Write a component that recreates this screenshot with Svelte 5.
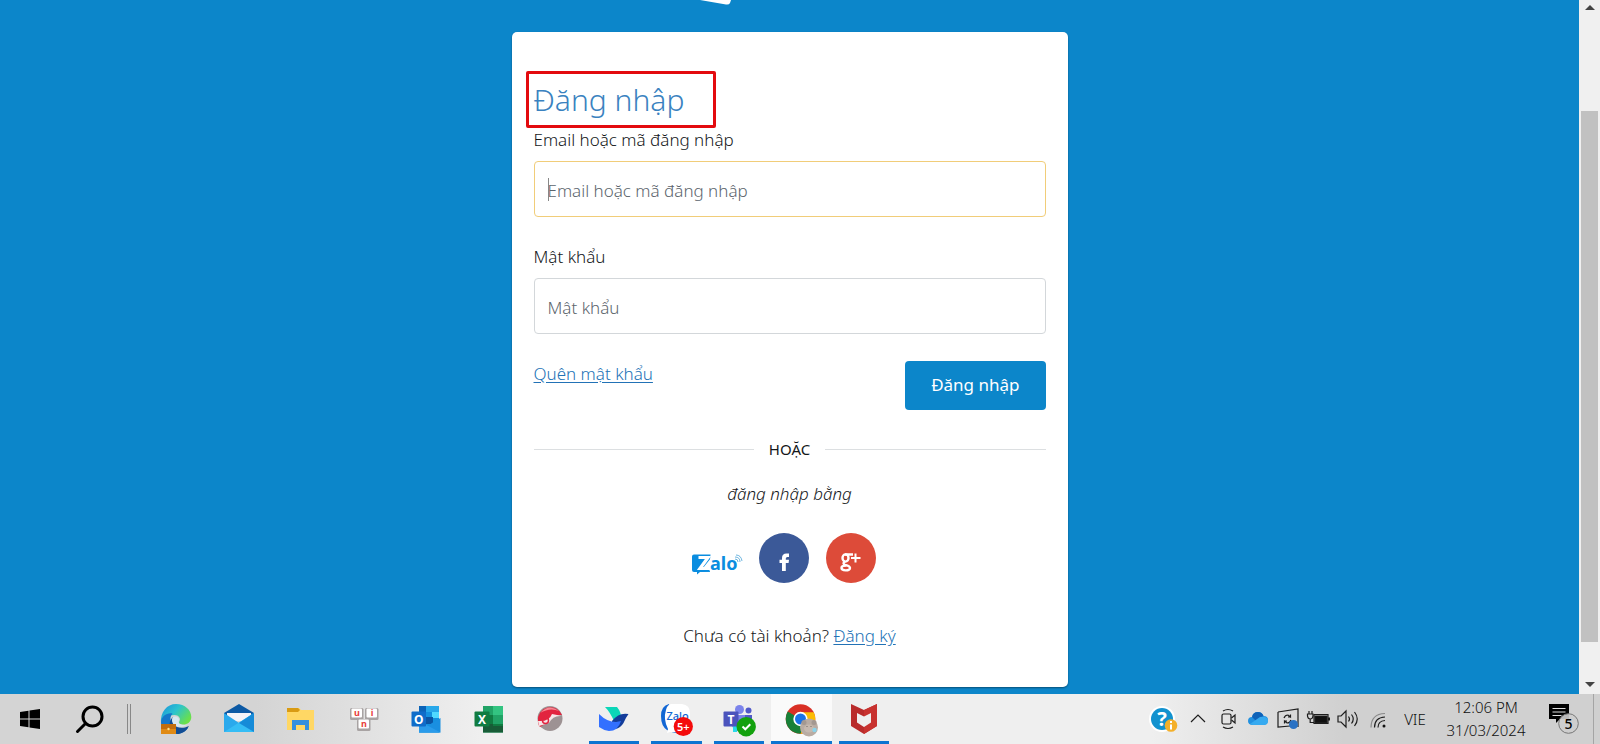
<script lang="ts">
  let email = $state('')
  let password = $state('')

  type App = { id: string; label: string; running?: boolean; active?: boolean }

  const apps: App[] = [
    { id: 'edge', label: 'Microsoft Edge' },
    { id: 'mail', label: 'Mail' },
    { id: 'files', label: 'File Explorer' },
    { id: 'unikey', label: 'UniKey' },
    { id: 'outlook', label: 'Outlook' },
    { id: 'excel', label: 'Excel' },
    { id: 'capture', label: 'Capture' },
    { id: 'bird', label: 'Lark', running: true },
    { id: 'zalo', label: 'Zalo', running: true },
    { id: 'teams', label: 'Teams', running: true },
    { id: 'chrome', label: 'Chrome', running: true, active: true },
    { id: 'mcafee', label: 'McAfee', running: true },
  ]

  const tray = ['chevron', 'camera', 'cloud', 'display', 'battery', 'volume', 'wifi']
</script>

<div class="screen">
  <div class="viewport">
    <main class="page">
      <svg class="logo-edge" viewBox="0 0 32 6" width="32" height="6" aria-hidden="true">
        <path d="M0 0h31l-1 3q-1 2-4 1.500z" fill="#fff" />
      </svg>

      <section class="card">
        <h1>Đăng nhập</h1>
        <form onsubmit={(e) => e.preventDefault()}>
          <div class="fields">
            <div>
              <label for="email">Email hoặc mã đăng nhập</label>
              <div class="control">
                <input id="email" class="current" type="text" placeholder="Email hoặc mã đăng nhập" bind:value={email} />
                <span class="caret"></span>
              </div>
            </div>
            <div>
              <label for="password">Mật khẩu</label>
              <div class="control">
                <input id="password" type="password" placeholder="Mật khẩu" bind:value={password} />
              </div>
            </div>
          </div>
          <div class="actions">
            <a href="#forgot">Quên mật khẩu</a>
            <button class="submit" type="submit">Đăng nhập</button>
          </div>
        </form>

        <div class="divider"><span>HOẶC</span></div>
        <p class="with">đăng nhập bằng</p>

        <div class="social">
          <a href="#zalo" aria-label="Zalo">
            <svg viewBox="0 0 50 50" width="50" height="50">
              <path d="M2 21.500h16.500L17 38.500l-9 .5-3 2.500V39H2q-2 0-2-2V23.500q0-2 2-2z" fill="#0a8de0" />
              <path d="M19 25l-8 10h10v5H15l4-2z" fill="#fff" />
              <path d="M6.500 24.500h9.500L8 35.500h10" fill="none" stroke="#fff" stroke-width="3.200" />
              <path d="M9 38.200h9" stroke="#0a8de0" stroke-width="1.400" />
              <text x="18" y="37" font-size="18" font-weight="700" fill="#0a8de0">alo</text>
              <path d="M43 26q3 0 3 3M43 24q5 0 5 5M44 22q5 0 6 6" fill="none" stroke="#4aa3d8" stroke-width=".8" />
            </svg>
          </a>
          <a href="#facebook" aria-label="Facebook">
            <svg viewBox="0 0 50 50" width="50" height="50">
              <circle cx="25" cy="25" r="25" fill="#3b5998" />
              <path d="M23 38V30h-2.500v-3.200H23v-1.800q0-4.500 4.500-4.500h2.500v3.400h-1.600q-1.600 0-1.600 1.600v1.300H30l-.4 3.200h-2.800v8z" fill="#fff" />
            </svg>
          </a>
          <a href="#google" aria-label="Google Plus">
            <svg viewBox="0 0 50 50" width="50" height="50">
              <circle cx="25" cy="25" r="25" fill="#dd4b39" />
              <g fill="none" stroke="#fff" stroke-width="2.400">
                <ellipse cx="19.500" cy="25" rx="3" ry="3.600" />
                <path d="M27 21.500h-8M19 28.500q-3 2 0 3.300c3 .8 5 1.300 5 3.200c0 3.300-8.500 3-8.500 0q0-2.500 5-2.500" />
                <path d="M29.500 20.500v9M25 25h9.500" stroke-width="2" />
              </g>
            </svg>
          </a>
        </div>

        <p class="signup">Chưa có tài khoản? <a href="#register">Đăng ký</a></p>
      </section>
    </main>

    <div class="scrollbar" aria-hidden="true">
      <svg viewBox="0 0 10 5" width="10" height="5"><path d="M0 5l5-5 5 5z" fill="#444" /></svg>
      <div class="track"><div class="thumb"></div></div>
      <svg viewBox="0 0 10 5" width="10" height="5"><path d="M0 0l5 5 5-5z" fill="#444" /></svg>
    </div>
  </div>

  <footer class="taskbar">
    <button class="sys" aria-label="Start">
      <svg viewBox="0 0 20 20" width="20" height="20"><path d="M0 3l8.500-1.200v7.700H0zM9.500 1.600L20 0v9.500H9.500zM0 10.500h8.500v7.700L0 17zM9.500 10.500H20V20L9.500 18.400z" /></svg>
    </button>
    <button class="sys" aria-label="Search">
      <svg viewBox="0 0 28 28" width="28" height="28" fill="none" stroke="#000" stroke-width="3"><circle cx="16.500" cy="11.500" r="9.500" /><path d="M9.500 18.500L1.500 26.500" stroke-linecap="round" /></svg>
    </button>
    <span class="grip"></span>

    <nav class="apps">
      {#each apps as app}
        <button class="app" class:running={app.running} class:active={app.active} aria-label={app.label}>
          <svg viewBox="0 0 32 32" width="32" height="32">
            {#if app.id === 'edge'}
              <defs>
                <linearGradient id="edge-a" x1="0" y1="0" x2="1" y2=".6"><stop offset="0" stop-color="#1b8fdc" /><stop offset=".5" stop-color="#2bc3cf" /><stop offset="1" stop-color="#6be04a" /></linearGradient>
              </defs>
              <path d="M16 1c9 0 15.300 6 15.300 13 0 5-4 7.500-8 7.500-3 0-5-1.200-4-3 2-3-.5-6.500-5-6.500C8 12 3 15 1 20 0 9 7 1 16 1z" fill="url(#edge-a)" />
              <path d="M1 20C1 13 7 9.500 12.500 10.500 8 15 11 24 21 26l7-1c-3 4-8 6-12 6C7 31 1 26 1 20z" fill="#1577c9" />
              <path d="M13 14c-2 8 5 14 16 9-3 6-8 8-12 8C8 28 8 18 13 14z" fill="#124d94" />
              <path d="M12 17c0-5 7-4 7 0-1 3-1 5 8 5-8 4-15 1-15-5z" fill="#d8e8f0" />
              <rect x="1" y="21" width="15" height="10" fill="#e08a14" /><path d="M1 21h15v5H1z" fill="#c26d0c" /><circle cx="8.500" cy="26" r="1.200" fill="#ffe08a" />
            {:else if app.id === 'mail'}
              <path d="M1 10L16 1l15 9v4H1z" fill="#0c59a4" />
              <path d="M4 10h24v8H4z" fill="#f3f3f8" />
              <path d="M1 10l15 10 15-10v19H1z" fill="#2aa9ec" />
              <path d="M31 10L1 29h30z" fill="#35bdf5" /><path d="M16 20L31 29V10z" fill="#168bd8" />
            {:else if app.id === 'files'}
              <path d="M2 5h12l2 2h13v20H2z" fill="#ffd764" /><path d="M2 5h11l2 2-2 2H2z" fill="#d99b13" />
              <path d="M7 27V17h17v10h-4v-5h-9v5z" fill="#3490dc" />
            {:else if app.id === 'unikey'}
              {#each [[2, 5, 'u'], [17, 5, 'i'], [9, 16, 'n']] as [x, y, ch]}
                <rect {x} {y} width="13.500" height="12" rx="1.500" fill="#a8a3a3" />
                <rect x={+x + 1.5} y={+y + 0.5} width="10.500" height="9" rx="1" fill="#fff" />
                <text x={+x + 7} y={+y + 8} font-size="9" font-weight="700" text-anchor="middle" fill="#e8403c">{ch}</text>
              {/each}
            {:else if app.id === 'outlook'}
              <path d="M9 3h20v26.500H9z" fill="#1490df" /><path d="M9 3h7v9H9z" fill="#0a63b8" /><path d="M16 3h13v6H16z" fill="#28a8ea" /><path d="M22 9h7v6h-7z" fill="#50d9ff" /><path d="M15 14h8v7h-8z" fill="#0a55a5" />
              <path d="M30.500 15v14.500H9L22 20z" fill="#1a8fe0" /><path d="M9 18l21.500 11.500H9z" fill="#2a9bea" />
              <rect x="1.500" y="8.500" width="14.500" height="15" rx="1" fill="#0f6cc9" /><text x="8.700" y="20.500" font-size="12" font-weight="700" text-anchor="middle" fill="#fff">O</text>
            {:else if app.id === 'excel'}
              <path d="M10 3h20v26.500H10z" fill="#21a366" /><path d="M20 3h10v9H20z" fill="#33c481" /><path d="M10 12h10v9H10z" fill="#107c41" /><path d="M10 21h20v8.500H10z" fill="#185c37" /><path d="M20 21h10v2H20z" fill="#107c41" />
              <rect x="1.500" y="8.500" width="15" height="15" rx="1" fill="#107c41" /><text x="9" y="20.500" font-size="12" font-weight="700" text-anchor="middle" fill="#fff">X</text>
            {:else if app.id === 'capture'}
              <circle cx="15" cy="15.500" r="12.500" fill="#9d9293" />
              <path d="M3 18A12.500 12.500 0 0 1 27 12q-8-1-14 7l-8 5q-2-2-2-6z" fill="#e2243f" /><path d="M5 10q9-10 19-2-9-4-19 2z" fill="#f58a95" />
              <path d="M3 18q11 1 14-7l10 2q-9-1-13 7l-10 3z" fill="#f6e6e7" />
              <circle cx="10.500" cy="17.500" r="3" fill="none" stroke="#e2243f" stroke-width="1.500" />
            {:else if app.id === 'bird'}
              <path d="M7 4h12q4 5 4 10l-7 4Q12 9 7 4z" fill="#0bd6b8" />
              <path d="M14 18q7-9 16.500-7-3 4-5 9-3 5-8 6-4-4-3.500-8z" fill="#133c9a" /><path d="M1 11q8 8 17 8l5-1q-3 10-12 10-6-1-10-4z" fill="#3370ff" />
            {:else if app.id === 'zalo'}
              <path d="M9 1Q1 3 1 13t6 14q5 3 12 3l-8-14z" fill="#1266d4" />
              <path d="M11 1h11q8 1 8 9v9q-1 9-9 10H10l-3 1 1-4Q3 16 6 7q1-5 5-6z" fill="#fff" />
              <text x="6.500" y="16.500" font-size="11" font-weight="500" fill="#1266d4">Zalo</text>
              <circle cx="23.300" cy="23.500" r="9.600" fill="#f40b0b" /><text x="23.300" y="27.500" font-size="11" font-weight="600" text-anchor="middle" fill="#fff">5+</text>
            {:else if app.id === 'teams'}
              <circle cx="16.500" cy="6.500" r="4.500" fill="#7b83eb" /><circle cx="25.500" cy="7.500" r="3" fill="#5059c9" />
              <path d="M11 12h12v10q-2 7-9 6-4-2-5-5z" fill="#7b83eb" /><path d="M22 12h7v9h-7z" fill="#5059c9" /><path d="M10 22h4v7h-4z" fill="#29d9ea" />
              <rect x=".5" y="8.500" width="15" height="15" rx="1" fill="#4b53bc" /><text x="8" y="20.500" font-size="12" font-weight="700" text-anchor="middle" fill="#fff">T</text>
              <circle cx="23.200" cy="23.700" r="9.700" fill="#13a10e" /><path d="M19.500 23.500l2.800 2.800 5-5" fill="none" stroke="#fff" stroke-width="2" />
            {:else if app.id === 'chrome'}
              <circle cx="15.500" cy="16" r="14.800" fill="#d93025" />
              <path d="M15.500 16L2.700 8.600a14.800 14.800 0 0 0 12.800 22.200l7-12z" fill="#188038" /><path d="M15.500 9.300h13.200a14.800 14.800 0 0 1-13.200 21.500l6-12z" fill="#fbbc04" />
              <circle cx="15.500" cy="16" r="7.200" fill="#fff" /><circle cx="15.500" cy="16" r="5.500" fill="#1a73e8" />
              <circle cx="24" cy="24.500" r="9" fill="#b9aca3" /><circle cx="19" cy="19.500" r="2.500" fill="#a39891" /><circle cx="29" cy="19.500" r="2.500" fill="#a39891" /><ellipse cx="24" cy="25.500" rx="5" ry="4" fill="#c6b9af" /><circle cx="22" cy="23.500" r=".6" fill="#685f5a" /><circle cx="26" cy="23.500" r=".6" fill="#685f5a" /><circle cx="29.500" cy="27" r="2.200" fill="#8bd3ea" />
            {:else}
              <path d="M3 1l13 6 13-6v22l-13 8-13-8z" fill="#b92b2b" /><path d="M16 7l13-6v22l-13 8z" fill="#c8322f" /><path d="M9 10l7 3.500L23 10v9.500L16 24l-7-4.500z" fill="#efefef" />
            {/if}
          </svg>
        </button>
      {/each}
    </nav>

    <div class="tray">
      <button class="help" aria-label="Help">
        <svg viewBox="0 0 28 28" width="28" height="28">
          <circle cx="13" cy="14" r="13" fill="#fff" /><circle cx="13" cy="14" r="11" fill="#1292cf" />
          <text x="13" y="21" font-size="20" font-weight="700" text-anchor="middle" fill="#fff">?</text>
          <circle cx="22" cy="20.500" r="6.300" fill="#f4b02a" /><path d="M22 16v2M22 19.500v5" stroke="#fff" stroke-width="2" />
        </svg>
      </button>
      {#each tray as item}
        <button class="cell" aria-label={item}>
          <svg viewBox="0 0 24 24" width="24" height="24" fill="none" stroke="#1d1d1d" stroke-width="1.200">
            {#if item === 'chevron'}
              <path d="M5 15l7-7 7 7" />
            {:else if item === 'camera'}
              <rect x="6" y="7" width="9" height="10" rx="1.500" /><path d="M15.500 11l3.500-3v8l-3.500-3M7 4q5-3 10 0M7 20q5 3 10 0" />
            {:else if item === 'cloud'}
              <g stroke="none"><path d="M7 18q-5 0-5-4t4-4q1-5 6-5 4 0 5.500 4Q22 9 22 13t-4 5z" fill="#2291e0" /><path d="M6 10q1-5 6-5 4 0 5.500 4L10 14z" fill="#0f62b8" /><path d="M4 17l10-7q8-1 8 4 0 4-4 4H7z" fill="#36aaf0" /></g>
            {:else if item === 'display'}
              <path d="M2 5l20-3v18M2 5v15l12-1" /><path d="M8 11q1-3 4-3l2.500 2V7.500M14.500 10H12M15 13q-1 3-4 3l-2.500-2v2.500M8.500 14H11" /><circle cx="17.500" cy="17.500" r="4.500" fill="#2a72c4" stroke="none" />
            {:else if item === 'battery'}
              <path d="M8 7.500h14v9H8z" /><path d="M9 9h12v6.500H9z" fill="#111" /><path d="M23 10.500v3" stroke-width="2" /><path d="M3 4v3M6 4v3M1.500 7H7v2q-.5 3-2.800 3T1.500 9zM4.200 12v3.500H8" />
            {:else if item === 'volume'}
              <path d="M2 9h3l5-5v16l-5-5H2z" /><path d="M12.500 9.500q2 2.500 0 5M15.500 7.500q3.500 4.500 0 9M18.500 5q5.500 7 0 14" />
            {:else}
              <circle cx="18" cy="19" r="1.500" fill="#111" stroke="none" /><path d="M12 20.500q0-6.500 7-7M8.500 20.500q0-10 10.500-10.500" /><path d="M5 20.500Q5 7 19 6.500" stroke="#888" />
            {/if}
          </svg>
        </button>
      {/each}
      <button class="lang">VIE</button>
      <button class="clock"><time datetime="2024-03-31T12:06"><span>12:06 PM</span><span>31/03/2024</span></time></button>
      <button class="notes" aria-label="Notifications">
        <svg viewBox="0 0 30 30" width="30" height="30">
          <path d="M0 0h20v15h-9l-4 4v-4H0z" /><path d="M3.500 4.500h13M3.500 8h13M3.500 11.500h9" stroke="#ddd" stroke-width="1.200" />
          <circle cx="19.500" cy="19.500" r="9.800" fill="#cdcdcd" fill-opacity=".9" stroke="#777" /><text x="19.500" y="24.500" font-size="14" font-weight="500" text-anchor="middle">5</text>
        </svg>
      </button>
      <span class="desktop"></span>
    </div>
  </footer>
</div>

<style>
  :global(body) { margin: 0; }
  .screen {
    display: flex; flex-direction: column; min-height: 100vh;
    font: 350 17px/24px "Noto Sans", "Open Sans", sans-serif; color: #14171a;
  }
  button { font: inherit; color: inherit; border: 0; background: none; padding: 0; cursor: pointer; }
  p { margin: 0; }
  svg { display: block; overflow: visible; flex: none; }
  a { color: #2272b6; text-underline-offset: 2px; }

  .viewport { flex: 1; display: flex; }
  .page { position: relative; flex: 1; background: #0c86ca; padding: 32px 16px 7px; }
  .logo-edge { position: absolute; top: 0; left: calc(50% - 90px); }

  .card {
    box-sizing: border-box; max-width: 556px; margin: 0 auto; padding: 39px 22px;
    background: #fff; border-radius: 5px; box-shadow: 0 1px 2px rgba(0, 0, 0, 0.4);
  }
  h1 {
    box-sizing: border-box; width: 190px; margin: 0 0 0 -8px; padding-left: 5px;
    border: 3px solid #e30b0f; border-radius: 2px;
    font-size: 30px; line-height: 51px; font-weight: 350; color: #3a82c0;
  }
  .fields { display: grid; gap: 28px; }
  label { display: block; margin-bottom: 9px; }
  .control { position: relative; }
  input {
    display: block; box-sizing: border-box; width: 100%; height: 56px; padding: 2px 13px 0;
    border: 1px solid #d3d7da; border-radius: 4px; background: #fff;
    font: inherit; color: inherit; outline: none;
  }
  input::placeholder { color: #5c656d; opacity: 1; }
  input.current, input:focus { border-color: #f1cd79; }
  .caret { position: absolute; left: 14px; top: 17px; width: 1px; height: 23px; background: #888; }

  .actions { display: flex; justify-content: space-between; align-items: flex-start; margin-top: 27px; }
  .actions a { margin-top: 1px; }
  .submit { padding: 12px 26px 13px; background: #0c86ca; border-radius: 4px; color: #fff; font-weight: 400; }

  .divider {
    display: flex; align-items: center; gap: 15px; margin: 29px 0 23px;
    font-size: 15px; line-height: 20px; font-weight: 400;
  }
  .divider::before, .divider::after { content: ""; flex: 1; height: 1px; background: #dcdfe1; }
  .with { text-align: center; font-style: italic; }
  .social { display: flex; justify-content: center; gap: 17px; margin: 27px 12px 41px 0; }
  .social a { text-decoration: none; }
  .signup { text-align: center; }

  .scrollbar {
    width: 21px; box-sizing: border-box; padding: 5px 0 7px; background: #f0f0f0;
    display: flex; flex-direction: column; align-items: center;
  }
  .track { flex: 1; align-self: stretch; padding: 101px 2px 40px; display: flex; }
  .thumb { flex: 1; background: #c1c1c1; }

  .taskbar {
    display: flex; height: 50px; color: #111;
    background: linear-gradient(90deg, #d4d4d4 16%, #efefef 30%, #efefef 72%, #d0d0d0 84%);
  }
  .sys { width: 60px; display: grid; place-items: center; }
  .grip { width: 2px; height: 30px; margin: 10px 14px 0 7px; border: solid #888; border-width: 0 1px; }
  .apps { width: 750px; display: grid; grid-template-columns: repeat(12, 1fr); }
  .app { position: relative; display: grid; place-items: center; margin: 0 1px; }
  .running::after { content: ""; position: absolute; bottom: 0; left: 5px; right: 5px; height: 3px; background: #0d74d1; }
  .active { background: #fafafa; }
  .active::after { left: 0; right: 0; }

  .tray { display: flex; align-items: center; margin-left: auto; font-size: 15px; line-height: 23px; }
  .help { width: 40px; display: grid; place-items: center; }
  .cell { width: 30px; display: grid; place-items: center; }
  .lang { width: 44px; }
  .clock { width: 98px; white-space: nowrap; }
  .clock span { display: block; }
  .notes { width: 58px; display: grid; place-items: center; }
  .desktop { width: 6px; height: 50px; border-left: 1px solid #a5a5a5; }
</style>
